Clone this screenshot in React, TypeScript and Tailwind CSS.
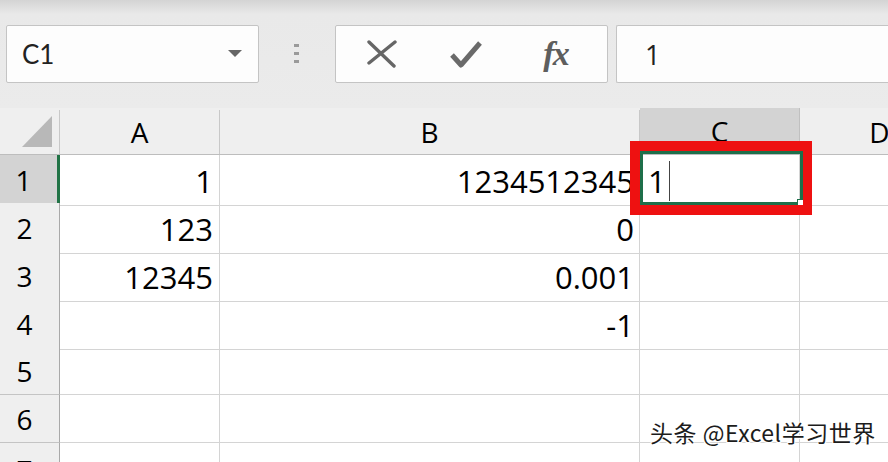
import React from "react";

const ROWS: { a: string; b: string }[] = [
  { a: "1", b: "1234512345" },
  { a: "123", b: "0" },
  { a: "12345", b: "0.001" },
  { a: "", b: "-1" },
  { a: "", b: "" },
  { a: "", b: "" },
  { a: "", b: "" },
];

const GRID_COLS = "grid-cols-[60px_160px_420px_160px_160px]";

const App: React.FC = () => {
  return (
    <div
      className="relative w-[888px] h-[462px] overflow-hidden bg-white text-black"
      style={{ fontFamily: '"Open Sans", "Noto Sans", sans-serif' }}
    >
      {/* formula bar */}
      <div className="h-[108px] pt-[25px] bg-[linear-gradient(to_bottom,#d4d4d4_0px,#e9e9e9_14px,#ebebeb_100%)]">
        <div className="flex h-[58px] items-stretch">
          <div className="ml-[6px] w-[253px] flex items-center justify-between bg-[#fdfdfd] border border-[#c4c4c4] rounded-[2px] pl-[15px] pr-[16px]">
            <span className="text-[26px] leading-none text-[#222]" style={{ fontFamily: "Lato, sans-serif" }}>
              C1
            </span>
            <svg width="14" height="8" viewBox="0 0 14 8">
              <path d="M0 0 H14 L7 7 Z" fill="#666" />
            </svg>
          </div>
          <div className="w-[76px] flex items-center justify-center">
            <svg width="8" height="24" viewBox="0 0 8 24">
              <rect x="1" y="2" width="5" height="3" fill="#9a9a9a" />
              <rect x="1" y="10" width="5" height="3" fill="#9a9a9a" />
              <rect x="1" y="18" width="5" height="3" fill="#9a9a9a" />
            </svg>
          </div>
          <div className="w-[273px] flex items-center bg-[#fdfdfd] border border-[#c4c4c4] rounded-[2px]">
            <div className="w-[87px] flex justify-center pl-[4px]">
              <svg width="32" height="28" viewBox="0 0 32 28">
                <path d="M3 2 L28 26 M29 2 L3 23" stroke="#666" strokeWidth="3.4" strokeLinecap="round" fill="none" />
              </svg>
            </div>
            <div className="w-[85px] flex justify-center">
              <svg width="34" height="28" viewBox="0 0 34 28">
                <path d="M3 15 L12 25 L31 3" stroke="#6a6a6a" strokeWidth="5" strokeLinejoin="round" fill="none" />
              </svg>
            </div>
            <div className="flex-1 flex justify-center pr-[4px]">
              <span
                className="italic font-bold text-[34px] leading-none text-[#5e5e5e] tracking-[-2px]"
                style={{ fontFamily: '"Liberation Serif", serif' }}
              >
                fx
              </span>
            </div>
          </div>
          <div className="ml-[8px] flex-1 flex items-center bg-[#fdfdfd] border border-[#c4c4c4] border-r-0 rounded-l-[2px] pl-[28px]">
            <span className="text-[27px] leading-none text-[#222]">1</span>
          </div>
        </div>
      </div>

      {/* column headers */}
      <div className={`grid ${GRID_COLS} h-[47px] bg-[#efefef] border-b border-[#bdbdbd]`}>
        <div className="relative border-r border-[#c8c8c8] mt-[2px] flex items-end justify-end pr-[7px] pb-[7px]">
          <svg width="30" height="31" viewBox="0 0 30 31">
            <path d="M30 0 V31 H0 Z" fill="#b8b8b8" />
          </svg>
        </div>
        {["A", "B", "C", "D"].map((c) => (
          <div
            key={c}
            className={`flex items-center justify-center text-[28px] ${
              c === "C" ? "bg-[#d3d3d3] border-r border-[#c0c0c0]" : "border-r border-[#c8c8c8] mt-[2px]"
            }`}
          >
            {c}
          </div>
        ))}
      </div>

      {/* body */}
      {ROWS.map((r, i) => (
        <div key={i} className={`grid ${GRID_COLS} h-[48px]`}>
          <div
            className={`flex items-center justify-center pr-[10px] text-[28px] border-b border-[#c4c4c4] ${
              i === 0 ? "bg-[#d3d3d3] border-r-[3px] border-r-[#217346]" : "bg-[#efefef] border-r border-r-[#a9a9a9]"
            } ${i === 6 ? "items-start pt-[6px]" : ""}`}
          >
            {i + 1}
          </div>
          <div className="flex items-center justify-end pr-[6px] pt-[3px] text-[31px] border-r border-b border-[#d4d4d4]">
            {r.a}
          </div>
          <div className="flex items-center justify-end pr-[5px] pt-[3px] text-[31px] border-r border-b border-[#d4d4d4]">
            {r.b}
          </div>
          <div className="relative flex items-center pl-[8px] pt-[3px] text-[31px] border-r border-b border-[#d4d4d4]">
            {i === 0 && (
              <>
                <span>1</span>
                <span className="ml-[3px] w-px h-[40px] bg-[#444]" />
              </>
            )}
          </div>
          <div className="border-b border-[#d4d4d4]" />
        </div>
      ))}

      {/* active cell + highlight */}
      <div className="absolute left-[630px] top-[141px] w-[182px] h-[74px] border-[10px] border-[#ee1111]" />
      <div className="absolute left-[640px] top-[151px] w-[163px] h-[54px] border-[3px] border-[#1e6f4a]" />
      <div className="absolute left-[797px] top-[199px] w-[6px] h-[6px] bg-white border-l border-t border-[#1e6f4a]" />

      {/* watermark */}
      <div
        className="absolute left-[650px] top-[421px] text-[23px] leading-none tracking-[0.5px] text-[#1c1c1c] whitespace-nowrap"
        style={{
          fontFamily: '"Noto Sans CJK SC", "Noto Sans", sans-serif',
          textShadow: "1px 1px 0 #fff, -1px -1px 0 #fff, 1px -1px 0 #fff, -1px 1px 0 #fff",
        }}
      >
        头条 @Excel学习世界
      </div>
    </div>
  );
};

export default App;
